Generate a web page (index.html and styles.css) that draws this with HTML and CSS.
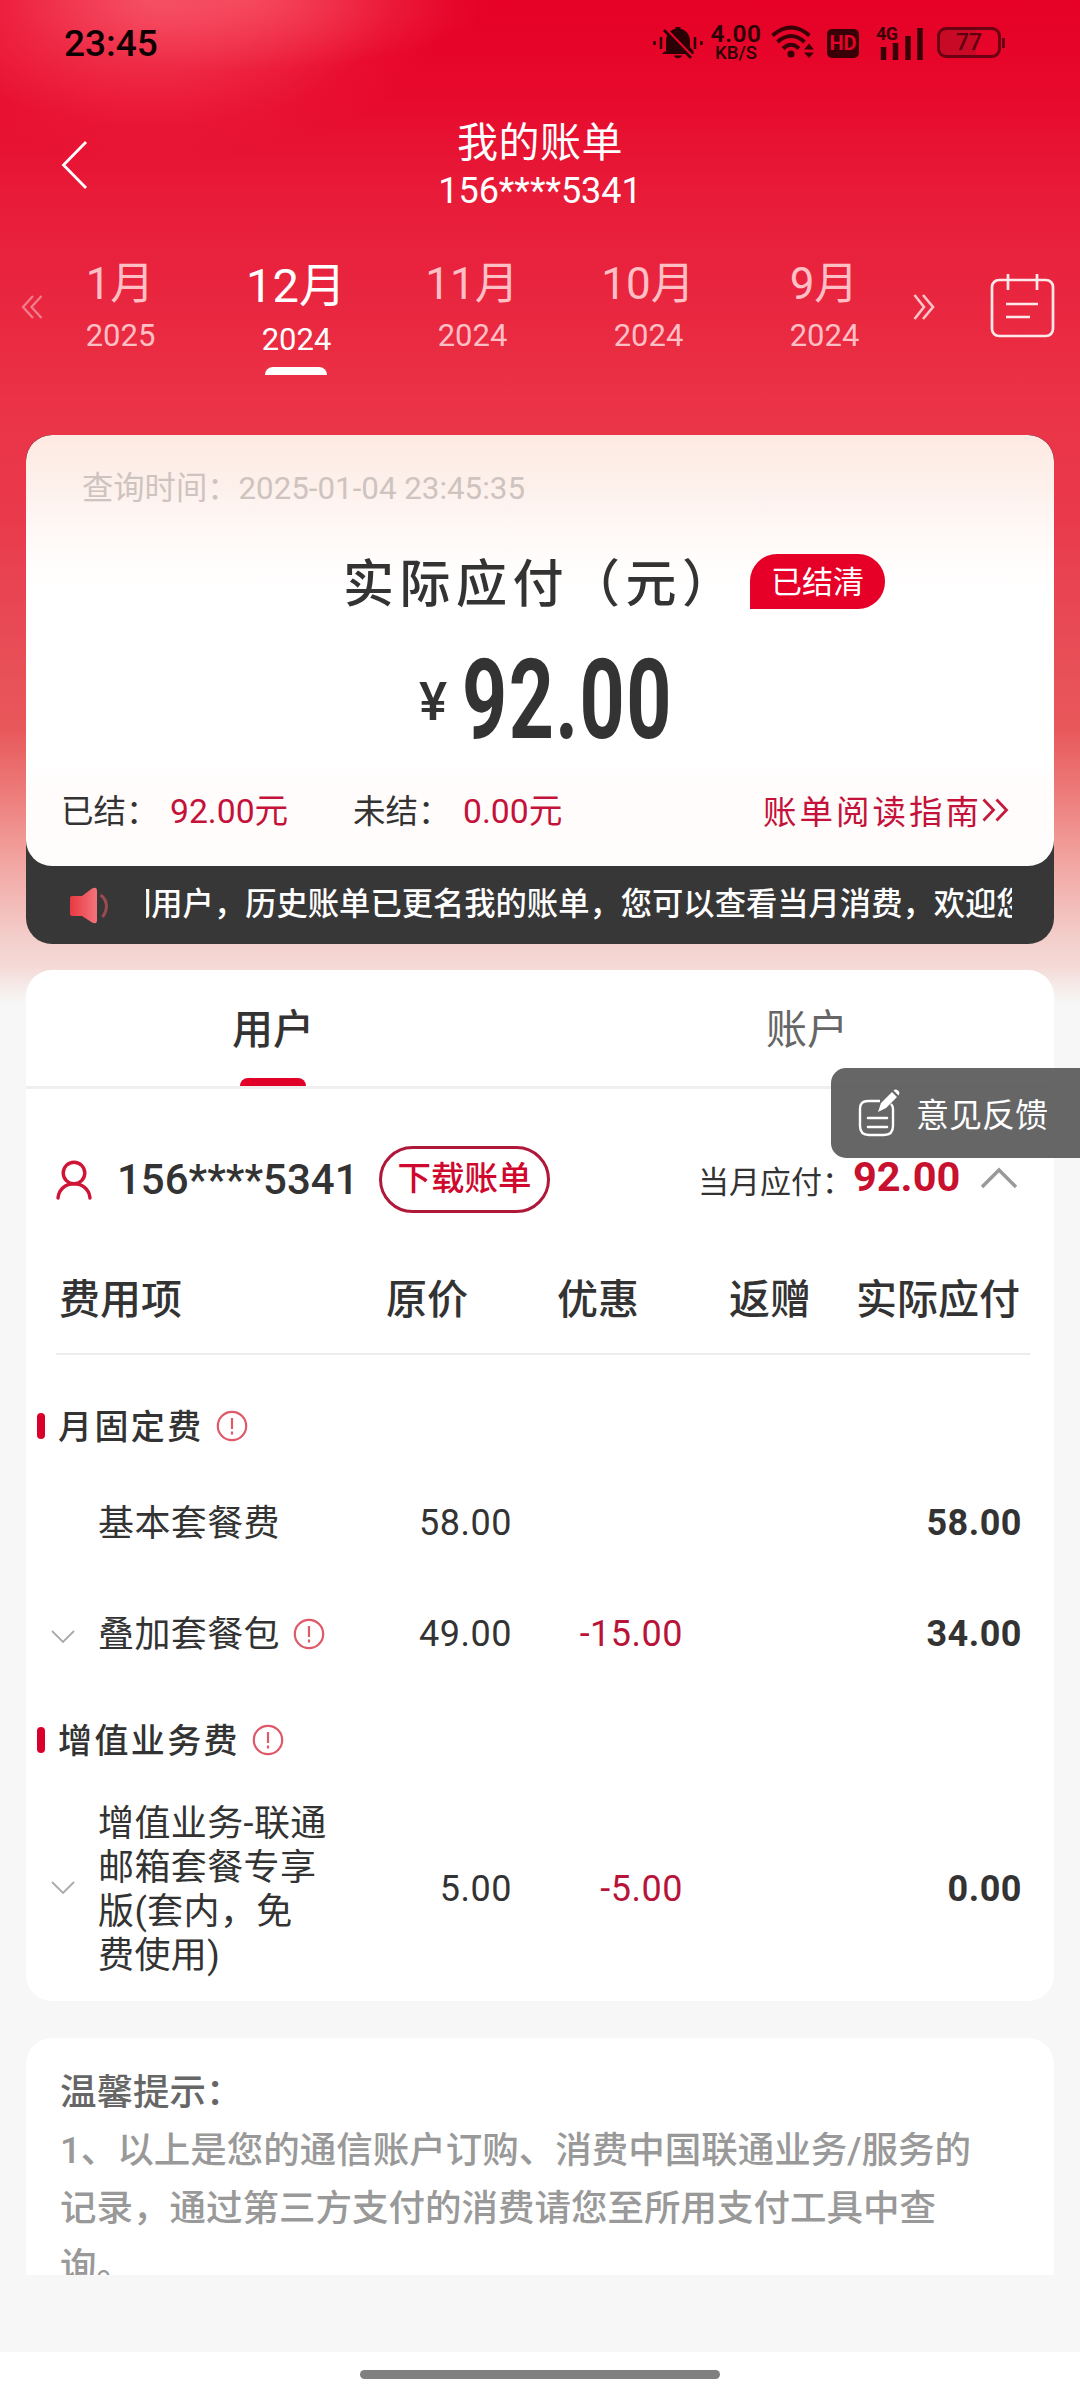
FILE: index.html
```html
<!DOCTYPE html>
<html lang="zh-CN">
<head>
<meta charset="utf-8">
<title>我的账单</title>
<link rel="stylesheet" href="styles.css">
</head>
<body>
<div class="screen">
  <div class="statusbar">
    <span class="clock">23:45</span>
    <div class="status-icons">
      <svg class="ic-mute" width="50" height="36" viewBox="0 0 50 36">
        <g fill="#2a0005"><path d="M13 27V17c0-7 5-11.500 9.500-12v-2h5v2c4.500 .5 9.500 5 9.500 12v6l3.500 4v3h-31v-1z"/><path d="M21 31.500h8c-1 3.500-7 3.500-8 0z"/></g>
        <path d="M12.500 4.500L40 33" stroke="#e6052a" stroke-width="2.600"/><path d="M11 6L38 34" stroke="#2a0005" stroke-width="2.600"/>
        <path d="M8 13v12M1.500 17v4M42 13v12M48.500 17v4" stroke="#2a0005" stroke-width="2.500"/>
      </svg>
      <div class="speed"><span class="speed-num">4.00</span><span class="speed-unit">KB/S</span></div>
      <svg class="ic-wifi" width="44" height="36" viewBox="0 0 44 36">
        <g fill="none" stroke="#3a0008" stroke-width="4"><path d="M1.500 11.500Q20 -4.500 38.500 11.500"/><path d="M6.500 18Q20 6 33.500 18"/><path d="M12 24.500Q20 17 28 24.500"/></g>
        <circle cx="20" cy="30" r="3.600" fill="#3a0008"/><path d="M33 25.500l5-6 5 6zM33 28.500l5 5.500 5-5.500z" fill="#3a0008"/>
      </svg>
      <span class="hd">HD</span>
      <div class="signal"><span>4G</span>
        <svg width="46" height="34" viewBox="0 0 46 34"><path d="M6.500 20v13M18.500 16v17M31 9v24M43 1v32" stroke="#3a0008" stroke-width="5.500"/></svg>
      </div>
      <div class="battery">77</div><i class="battery-tip"></i>
    </div>
  </div>

  <header class="nav">
    <svg class="back" width="28" height="50" viewBox="0 0 28 50"><path d="M25 2L2.500 25L25 48" fill="none" stroke="#fff" stroke-width="2.800"/></svg>
    <div class="nav-text"><h1>我的账单</h1><p>156****5341</p></div>
  </header>

  <nav class="months">
    <svg class="prev" width="22" height="24" viewBox="0 0 22 24"><path d="M12 1L2 12l10 11M20.500 1L10.500 12l10 11" fill="none" stroke="#fff" stroke-opacity=".4" stroke-width="2.300"/></svg>
    <div class="month"><b>1月</b><span>2025</span></div>
    <div class="month active"><b>12月</b><span>2024</span></div>
    <div class="month"><b>11月</b><span>2024</span></div>
    <div class="month"><b>10月</b><span>2024</span></div>
    <div class="month"><b>9月</b><span>2024</span></div>
    <svg class="next" width="22" height="26" viewBox="0 0 22 26"><path d="M1.500 1L11 13 1.500 25M10 1L20 13 10 25" fill="none" stroke="#ffc4c8" stroke-width="2.600"/></svg>
    <svg class="calendar" width="66" height="66" viewBox="0 0 66 66"><g fill="none" stroke="#ffe8ea" stroke-width="2.700"><rect x="2" y="7" width="61" height="56" rx="7"/><path d="M18 1v16M47 1v16M16 31h32M16 44h24"/></g></svg>
  </nav>

  <section class="summary">
    <div class="summary-card">
      <p class="query-time">查询时间：<span>2025-01-04 23:45:35</span></p>
      <div class="due-title"><h2>实际应付（元）</h2><span class="badge">已结清</span></div>
      <div class="amount"><span class="yen">¥</span><span class="amount-num">92.00</span></div>
      <div class="settle">
        <span>已结：</span><em class="paid">92.00元</em>
        <span class="unpaid">未结：</span><em>0.00元</em>
        <a class="guide">账单阅读指南<svg width="27" height="24" viewBox="0 0 27 24"><path d="M1.500 1.500l10 10.500-10 10.500M14.500 1.500l10 10.500-10 10.500" fill="none" stroke="#c41a3c" stroke-width="2.800"/></svg></a>
      </div>
    </div>
    <div class="notice">
      <svg width="40" height="37" viewBox="0 0 40 37"><defs><linearGradient id="horn"><stop offset="0" stop-color="#e83840"/><stop offset="1" stop-color="#f4747c"/></linearGradient></defs><path d="M3 9h10L23 1.500Q28 -1 28 4v29q0 5-5 2.500L13 29H3q-2 0-2-2V11q0-2 2-2z" fill="url(#horn)"/><path d="M31.500 8c7 5 8 14 2 22" fill="none" stroke="#9c4a50" stroke-width="3"/></svg>
      <div class="ticker"><span>们用户，历史账单已更名我的账单，您可以查看当月消费，欢迎您</span></div>
    </div>
  </section>

  <section class="bill">
    <div class="tabs"><div class="tab on">用户</div><div class="tab">账户</div></div>
    <div class="user-row">
      <svg width="36" height="40" viewBox="0 0 36 40"><g fill="none" stroke="#cf1436" stroke-width="3.400" stroke-linecap="round"><circle cx="18" cy="13" r="10.800"/><path d="M2 38C3.500 19 32.500 19 34 38"/></g></svg>
      <span class="phone-no">156****5341</span>
      <a class="download">下载账单</a>
      <span class="month-due">当月应付：</span><strong>92.00</strong>
      <svg class="fold" width="38" height="22" viewBox="0 0 38 22"><path d="M2 20L19 3l17 17" fill="none" stroke="#999" stroke-width="3.400"/></svg>
    </div>
    <div class="thead"><span>费用项</span><span>原价</span><span>优惠</span><span>返赠</span><span>实际应付</span></div>
    <div class="group first"><i></i><span>月固定费</span><svg class="info" viewBox="0 0 32 32"><circle cx="16" cy="16" r="14.200"/><path d="M16 8v11M16 21.500v3"/></svg></div>
    <div class="item i1"><span class="chev"></span><span class="name">基本套餐费</span><span class="num">58.00</span><span class="num cut"></span><span class="num final">58.00</span></div>
    <div class="item i2"><svg class="chev" viewBox="0 0 24 16"><path d="M1 2l11 11L23 2"/></svg><span class="name">叠加套餐包<svg class="info" viewBox="0 0 32 32"><circle cx="16" cy="16" r="14.200"/><path d="M16 8v11M16 21.500v3"/></svg></span><span class="num">49.00</span><span class="num cut">-15.00</span><span class="num final">34.00</span></div>
    <div class="group second"><i></i><span>增值业务费</span><svg class="info" viewBox="0 0 32 32"><circle cx="16" cy="16" r="14.200"/><path d="M16 8v11M16 21.500v3"/></svg></div>
    <div class="item i3"><svg class="chev" viewBox="0 0 24 16"><path d="M1 2l11 11L23 2"/></svg><span class="name">增值业务-联通<br>邮箱套餐专享<br>版(套内，免<br>费使用)</span><span class="num">5.00</span><span class="num cut">-5.00</span><span class="num final">0.00</span></div>
  </section>

  <section class="tips">
    <h3>温馨提示：</h3>
    <p>1、以上是您的通信账户订购、消费中国联通业务/服务的<br>记录，通过第三方支付的消费请您至所用支付工具中查<br>询。</p>
  </section>

  <footer class="home"><i></i></footer>

  <a class="feedback">
    <svg width="44" height="50" viewBox="0 0 44 50"><path d="M22 13H10Q2 13 2 21v17q0 9 9 9h15q9 0 9-9V21q0-3-2-5" fill="none" stroke="#fff" stroke-width="2.400"/><path d="M10 30h19M10 39h19" stroke="#fff" stroke-width="2.600" stroke-linecap="round"/><path d="M20 24l3-9L34 4l5 5L28 20zM35.500 2.500q2-2 4.500 0t.500 5z" fill="#fff"/></svg>
    <span>意见反馈</span>
  </a>
</div>
</body>
</html>
```
FILE: styles.css
```css
* { box-sizing: border-box; margin: 0; padding: 0; }
body { font-family: Roboto, "Noto Sans CJK SC", sans-serif; color: #333; }
svg { display: block; flex: none; }
h1, h2, h3, b, em { font-weight: 400; font-style: normal; }

.screen {
  position: relative;
  width: 1080px;
  height: 2400px;
  overflow: hidden;
  display: flex;
  flex-direction: column;
  background:
    radial-gradient(ellipse 300px 160px at 150px 0, rgba(255, 130, 140, .5), rgba(255, 115, 125, .34) 40%, rgba(255, 90, 100, .08) 80%, rgba(255, 90, 100, 0)),
    radial-gradient(ellipse 240px 70px at 250px 0, rgba(255, 115, 125, .4), rgba(255, 90, 100, 0)),
    linear-gradient(#e60026 0, #e70a2c 100px, #e81c39 200px, #e9263f 300px, #eb3246 400px, #e93a4b 520px, #e84854 614px, #e8585b 730px, #ed7c7a 793px, #f2a6a2 864px, #f3cdca 936px, #f4dad7 967px, #f6ecea 988px, #f7f7f7 1004px);
}

.statusbar { height: 88px; display: flex; justify-content: space-between; padding: 0 75px 0 64px; }
.clock { font-size: 37px; font-weight: 500; line-height: 87px; color: #0d0002; }
.status-icons { display: flex; align-items: flex-start; padding-top: 24px; color: #2a0005; }
.speed { display: flex; flex-direction: column; align-items: center; width: 52px; margin-left: 7px; font-weight: 600; }
.speed-num { font-size: 24.500px; line-height: 20px; letter-spacing: .5px; }
.speed-unit { font-size: 18.500px; line-height: 18px; font-weight: 500; }
.ic-wifi { margin-left: 9px; }
.hd { width: 32px; height: 29px; margin: 5px 0 0 12px; border-radius: 5px; background: #3a0008; color: #e6052a; font: 700 20px/29px Roboto, sans-serif; text-align: center; }
.signal { position: relative; width: 47px; margin: 3px 0 0 17px; padding-left: 1px; }
.signal span { position: absolute; left: 0; top: -2px; width: 24px; font-size: 18px; font-weight: 700; line-height: 18px; letter-spacing: -.5px; background: #e6052a; color: #3a0008; }
.battery { width: 64px; height: 31px; margin: 3px 0 0 14px; border: 3px solid #6b0012; border-radius: 9px; background: linear-gradient(90deg, #c80a26 62%, transparent 62%); color: #5c0010; font-size: 23px; font-weight: 500; line-height: 26px; text-align: center; }
.battery-tip { width: 3px; height: 10px; margin: 14px 0 0 1px; background: #6b0012; }

.nav { height: 167px; padding: 30px 61px 0; display: grid; grid-template-columns: 28px 1fr 28px; color: #fff; }
.back { margin-top: 22px; }
.nav-text { text-align: center; }
.nav h1 { font-size: 41px; line-height: 50px; letter-spacing: .5px; }
.nav p { font-size: 36px; line-height: 47px; }

.months { height: 180px; padding-left: 21px; display: flex; align-items: flex-start; }
.prev { margin: 40px -11px 0 0; }
.month { width: 176px; padding-top: 1px; display: flex; flex-direction: column; align-items: center; color: #ffbfc4; }
.month b { font-size: 44px; line-height: 56px; }
.month span { font-size: 31px; line-height: 48px; padding-left: 1px; }
.month.active { color: #fff; }
.month.active b { font-size: 47px; line-height: 59px; }
.month.active span { line-height: 50px; }
.month.active::after { content: ""; width: 62px; height: 8px; margin-top: 2px; background: #fff; border-radius: 8px 8px 0 0; }
.next { margin: 39px 0 0 1px; }
.calendar { margin: 18px 0 0 55px; }

.summary { width: 1028px; height: 509px; margin: 0 26px; border-radius: 26px; background: #383737; overflow: hidden; }
.summary-card { height: 431px; padding-top: 30px; border-radius: 26px; background: linear-gradient(#fdeae2 0, #fdf0eb 50px, #fef8f6 95px, #fffdfc 130px, #fff 160px, #fff 330px, #fffcfb 350px, #fffdfc); }
.query-time { padding-left: 56px; font-size: 31.300px; line-height: 48px; color: #cfc3bf; display: flex; }
.due-title { height: 74px; margin-top: 35px; padding-left: 317px; display: flex; align-items: flex-start; }
.due-title h2 { width: 407px; font-size: 51px; font-weight: 500; line-height: 74px; letter-spacing: 5.500px; white-space: nowrap; }
.badge { width: 135px; height: 55px; margin-top: 6px; border-radius: 27px 27px 27px 0; background: #e60027; color: #fff; font-size: 31px; line-height: 58px; text-align: center; }
.amount { height: 150px; margin-top: 3px; padding-left: 393px; display: flex; align-items: center; }
.yen { width: 43px; font-size: 53px; font-weight: 500; line-height: 60px; padding-top: 4px; }
.amount-num { font-size: 111px; font-weight: 700; line-height: 150px; transform: scaleX(.71); transform-origin: left; letter-spacing: 2px; }
.settle { height: 52px; margin-top: 7px; padding-left: 35px; display: flex; align-items: center; font-size: 32.500px; white-space: nowrap; }
.settle span { width: 109px; }
.settle em { color: #c4123a; font-size: 33.700px; }
.settle .paid { width: 183px; }
.settle .unpaid { width: 110px; }
.guide { margin-left: auto; padding: 3px 45px 0 0; display: flex; align-items: center; font-size: 33.500px; letter-spacing: 3px; color: #c4123a; }
.notice { height: 78px; padding-left: 43px; display: flex; align-items: center; color: #fff; font-size: 31.300px; font-weight: 500; }
.ticker { width: 866px; margin-left: 37px; overflow: hidden; display: flex; line-height: 50px; padding-bottom: 1px; }
.ticker span { margin-left: -26px; white-space: nowrap; }

.bill { height: 1031px; margin: 26px 26px 0; background: #fff; border-radius: 26px; }
.tabs { height: 119px; border-bottom: 3px solid #efefef; display: flex; justify-content: center; }
.tab { flex: none; width: 534px; font-size: 41px; line-height: 120px; color: #666; text-align: center; display: flex; flex-direction: column; align-items: center; }
.tab.on { color: #333; font-weight: 500; }
.tab.on::after { content: ""; width: 66px; height: 8px; margin-top: -12px; background: #e10028; border-radius: 8px 8px 0 0; }
.user-row { height: 180px; padding: 0 36px 0 30px; display: flex; align-items: center; }
.user-row > svg:first-child { margin-top: 1px; }
.phone-no { flex: none; width: 287px; padding-left: 25px; font-size: 42px; font-weight: 500; }
.download { flex: none; width: 171px; height: 67px; border: 3px solid #b0183a; border-radius: 34px; color: #d0082e; font-size: 33.500px; font-weight: 500; line-height: 60px; text-align: center; }
.month-due { flex: none; width: 155px; margin: 0 0 0 148px; font-size: 31px; white-space: nowrap; }
.user-row strong { margin-top: -5px; font-size: 41.500px; font-weight: 700; color: #c8102f; }
.fold { margin: -2px 0 0 auto; }
.thead { height: 86px; margin: 0 24px 0 30px; padding-left: 3px; border-bottom: 2px solid #ececec; display: grid; grid-template-columns: 327px 171px 172px 127px 1fr; font-size: 41px; font-weight: 500; line-height: 62px; white-space: nowrap; }
.group { height: 50px; padding-left: 11px; display: flex; align-items: center; font-size: 34px; font-weight: 500; letter-spacing: 2.400px; }
.group.first { margin-top: 46px; }
.group i { width: 8px; height: 26px; margin-right: 13px; border-radius: 4px; background: #d9002b; }
.group span { padding-bottom: 3px; }
.info { width: 32px; height: 32px; fill: none; stroke: #de5a68; stroke-width: 2.200; }
.group .info { margin-left: 12px; }
.item { display: grid; grid-template-columns: 24px 236px 201px 171px 339px; padding-left: 25px; align-items: center; font-size: 36px; }
.item .name { display: flex; }
.chev { width: 24px; height: 16px; margin-top: 5px; fill: none; stroke: #aaa; stroke-width: 1.800; }
.name { padding: 3px 0 0 23px; line-height: 43.800px; white-space: nowrap; letter-spacing: .4px; }
.name .info { margin: 4px 0 0 13px; }
.num { text-align: right; letter-spacing: .5px; }
.cut { color: #b8143a; }
.final { font-weight: 700; }
.i1 { height: 96px; margin-top: 24px; }
.i2 { height: 96px; margin: 15px 0 33px; }
.item.i3 { height: 176px; margin-top: 38px; }
.i3 .name { display: block; padding-top: 0; }
.i3 .num { padding-bottom: 5px; }
.i3 .chev { margin-top: -7px; }

.tips { height: 237px; margin: 37px 26px 0; padding: 26px 34px 0; background: #fff; border-radius: 26px 26px 0 0; overflow: hidden; font-size: 36.500px; line-height: 58px; white-space: nowrap; }
.tips h3 { font-size: 36.500px; font-weight: 500; color: #666; }
.tips p { color: #999; font-weight: 500; }
.home { height: 48px; margin-top: auto; background: #fff; display: flex; justify-content: center; }
.home i { width: 360px; height: 9px; margin-top: 18px; border-radius: 5px; background: #808080; }
.feedback { position: absolute; right: 0; top: 1068px; width: 249px; height: 90px; padding-left: 27px; border-radius: 15px 0 0 15px; background: rgba(89, 89, 89, .92); color: #fff; font-size: 33px; display: flex; align-items: center; gap: 14px; }
```
